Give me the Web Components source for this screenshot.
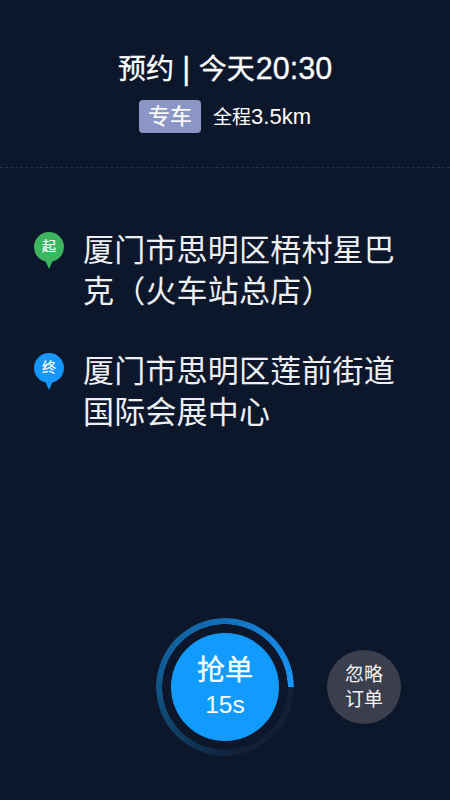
<!DOCTYPE html>
<html lang="zh">
<head>
<meta charset="utf-8">
<title>预约订单</title>
<style>
  html, body { margin: 0; height: 100%; background: #0c172b; }
  body { font-family: "Liberation Sans", "Noto Sans CJK SC", sans-serif; color: #fff; }
</style>
</head>
<body>
<order-page>
  <order-header slot="header" tag="专车" cjk="全程" distance="3.5km">预约<span class="sep"> | </span>今天<span class="num">20:30</span></order-header>
  <address-row kind="start" label="起">厦门市思明区梧村星巴克（火车站总店）</address-row>
  <address-row kind="end" label="终">厦门市思明区莲前街道国际会展中心</address-row>
  <order-actions slot="footer" seconds="15"></order-actions>
</order-page>

<script>
class OrderPage extends HTMLElement {
  constructor() {
    super();
    this.attachShadow({ mode: 'open' });
    this.shadowRoot.innerHTML = `
      <style>
        :host { display: flex; flex-direction: column; height: 800px; }
        main { flex: 1; padding: 62px 34px 0; display: flex; flex-direction: column; gap: 39px; }
        footer { padding-bottom: 44px; }
      </style>
      <slot name="header"></slot>
      <main><slot></slot></main>
      <footer><slot name="footer"></slot></footer>
    `;
  }
}

class OrderHeader extends HTMLElement {
  constructor() {
    super();
    this.attachShadow({ mode: 'open' });
    this.shadowRoot.innerHTML = `
      <style>
        :host { display: block; height: 168px; box-sizing: border-box; padding-top: 49px; border-bottom: 1px dashed #26324a; }
        h1 { margin: 0; height: 38px; font-size: 28px; line-height: 38px; font-weight: 400; -webkit-text-stroke: 0.3px #fff; text-align: center; color: #fff; }
        ::slotted(.num) { font-size: 30.5px; margin-left: 1px; }
        ::slotted(.sep) { font-size: 30.5px; font-weight: 400; }
        .meta { display: flex; justify-content: center; align-items: center; gap: 12px; margin-top: 13px; }
        .tag { width: 62px; height: 33px; border-radius: 4px; background: #8b96c6; font-size: 22px; line-height: 33px; text-align: center; -webkit-text-stroke: 0.2px #fff; }
        .distance { font-size: 19px; line-height: 33px; height: 33px; }
        .distance span { font-size: 22px; }
      </style>
      <h1><slot></slot></h1>
      <div class="meta">
        <span class="tag">${this.getAttribute('tag')}</span>
        <span class="distance">${this.getAttribute('cjk')}<span>${this.getAttribute('distance')}</span></span>
      </div>
    `;
  }
}

class AddressRow extends HTMLElement {
  constructor() {
    super();
    this.attachShadow({ mode: 'open' });
    const color = this.getAttribute('kind') === 'end' ? '#1797fb' : '#3eb55f';
    this.shadowRoot.innerHTML = `
      <style>
        :host { display: flex; gap: 19px; align-items: flex-start; }
        .pin { flex: none; width: 30px; height: 37px; margin-top: 2px; position: relative; }
        .pin svg { display: block; }
        .pin span { position: absolute; left: 0; top: 0; width: 30px; height: 30px; font-size: 14px; line-height: 29px; text-align: center; color: #fff; -webkit-text-stroke: 0.2px #fff; }
        .text { font-size: 31px; line-height: 41px; letter-spacing: 0.2px; color: #eef0f3; }
      </style>
      <div class="pin">
        <svg width="30" height="37" viewBox="0 0 30 37">
          <circle cx="15" cy="15" r="15" fill="${color}"/>
          <path d="M11 28 L19 28 L15 37 Z" fill="${color}"/>
        </svg>
        <span>${this.getAttribute('label')}</span>
      </div>
      <div class="text"><slot></slot></div>
    `;
  }
}

class OrderActions extends HTMLElement {
  constructor() {
    super();
    this.attachShadow({ mode: 'open' });
    this.shadowRoot.innerHTML = `
      <style>
        :host { display: grid; grid-template-columns: 1fr auto 1fr; align-items: center; }
        .ring {
          grid-column: 2; width: 138px; height: 138px; border-radius: 50%; position: relative;
          display: flex; align-items: center; justify-content: center;
        }
        .ring::before {
          content: ''; position: absolute; inset: 0; border-radius: 50%;
          background: conic-gradient(from 90deg, #111f38 0deg, #111f38 80deg, #10304f 110deg, #11598f 190deg, #1270b8 270deg, #1797fb 360deg);
          -webkit-mask: radial-gradient(circle, transparent 62.5px, #000 63px);
          mask: radial-gradient(circle, transparent 62.5px, #000 63px);
        }
        .grab {
          width: 108px; height: 108px; border-radius: 50%; background: #129bff; color: #fff;
          display: flex; flex-direction: column; align-items: center; justify-content: center;
        }
        .grab b { font-weight: 400; -webkit-text-stroke: 0.3px #fff; font-size: 28px; line-height: 36px; margin-top: -2px; }
        .grab span { font-size: 24.5px; line-height: 30px; margin-top: 1px; }
        .ignore {
          grid-column: 3; justify-self: start; margin-left: 33px; width: 74px; height: 74px; border-radius: 50%;
          background: #3a3e4d; color: #f2f2f4; font-size: 19px; line-height: 25px; text-align: center;
          display: flex; align-items: center; justify-content: center;
        }
      </style>
      <div class="ring">
        <div class="grab"><b>抢单</b><span>${this.getAttribute('seconds')}s</span></div>
      </div>
      <div class="ignore">忽略<br>订单</div>
    `;
  }
}

customElements.define('order-page', OrderPage);
customElements.define('order-header', OrderHeader);
customElements.define('address-row', AddressRow);
customElements.define('order-actions', OrderActions);
</script>
</body>
</html>
